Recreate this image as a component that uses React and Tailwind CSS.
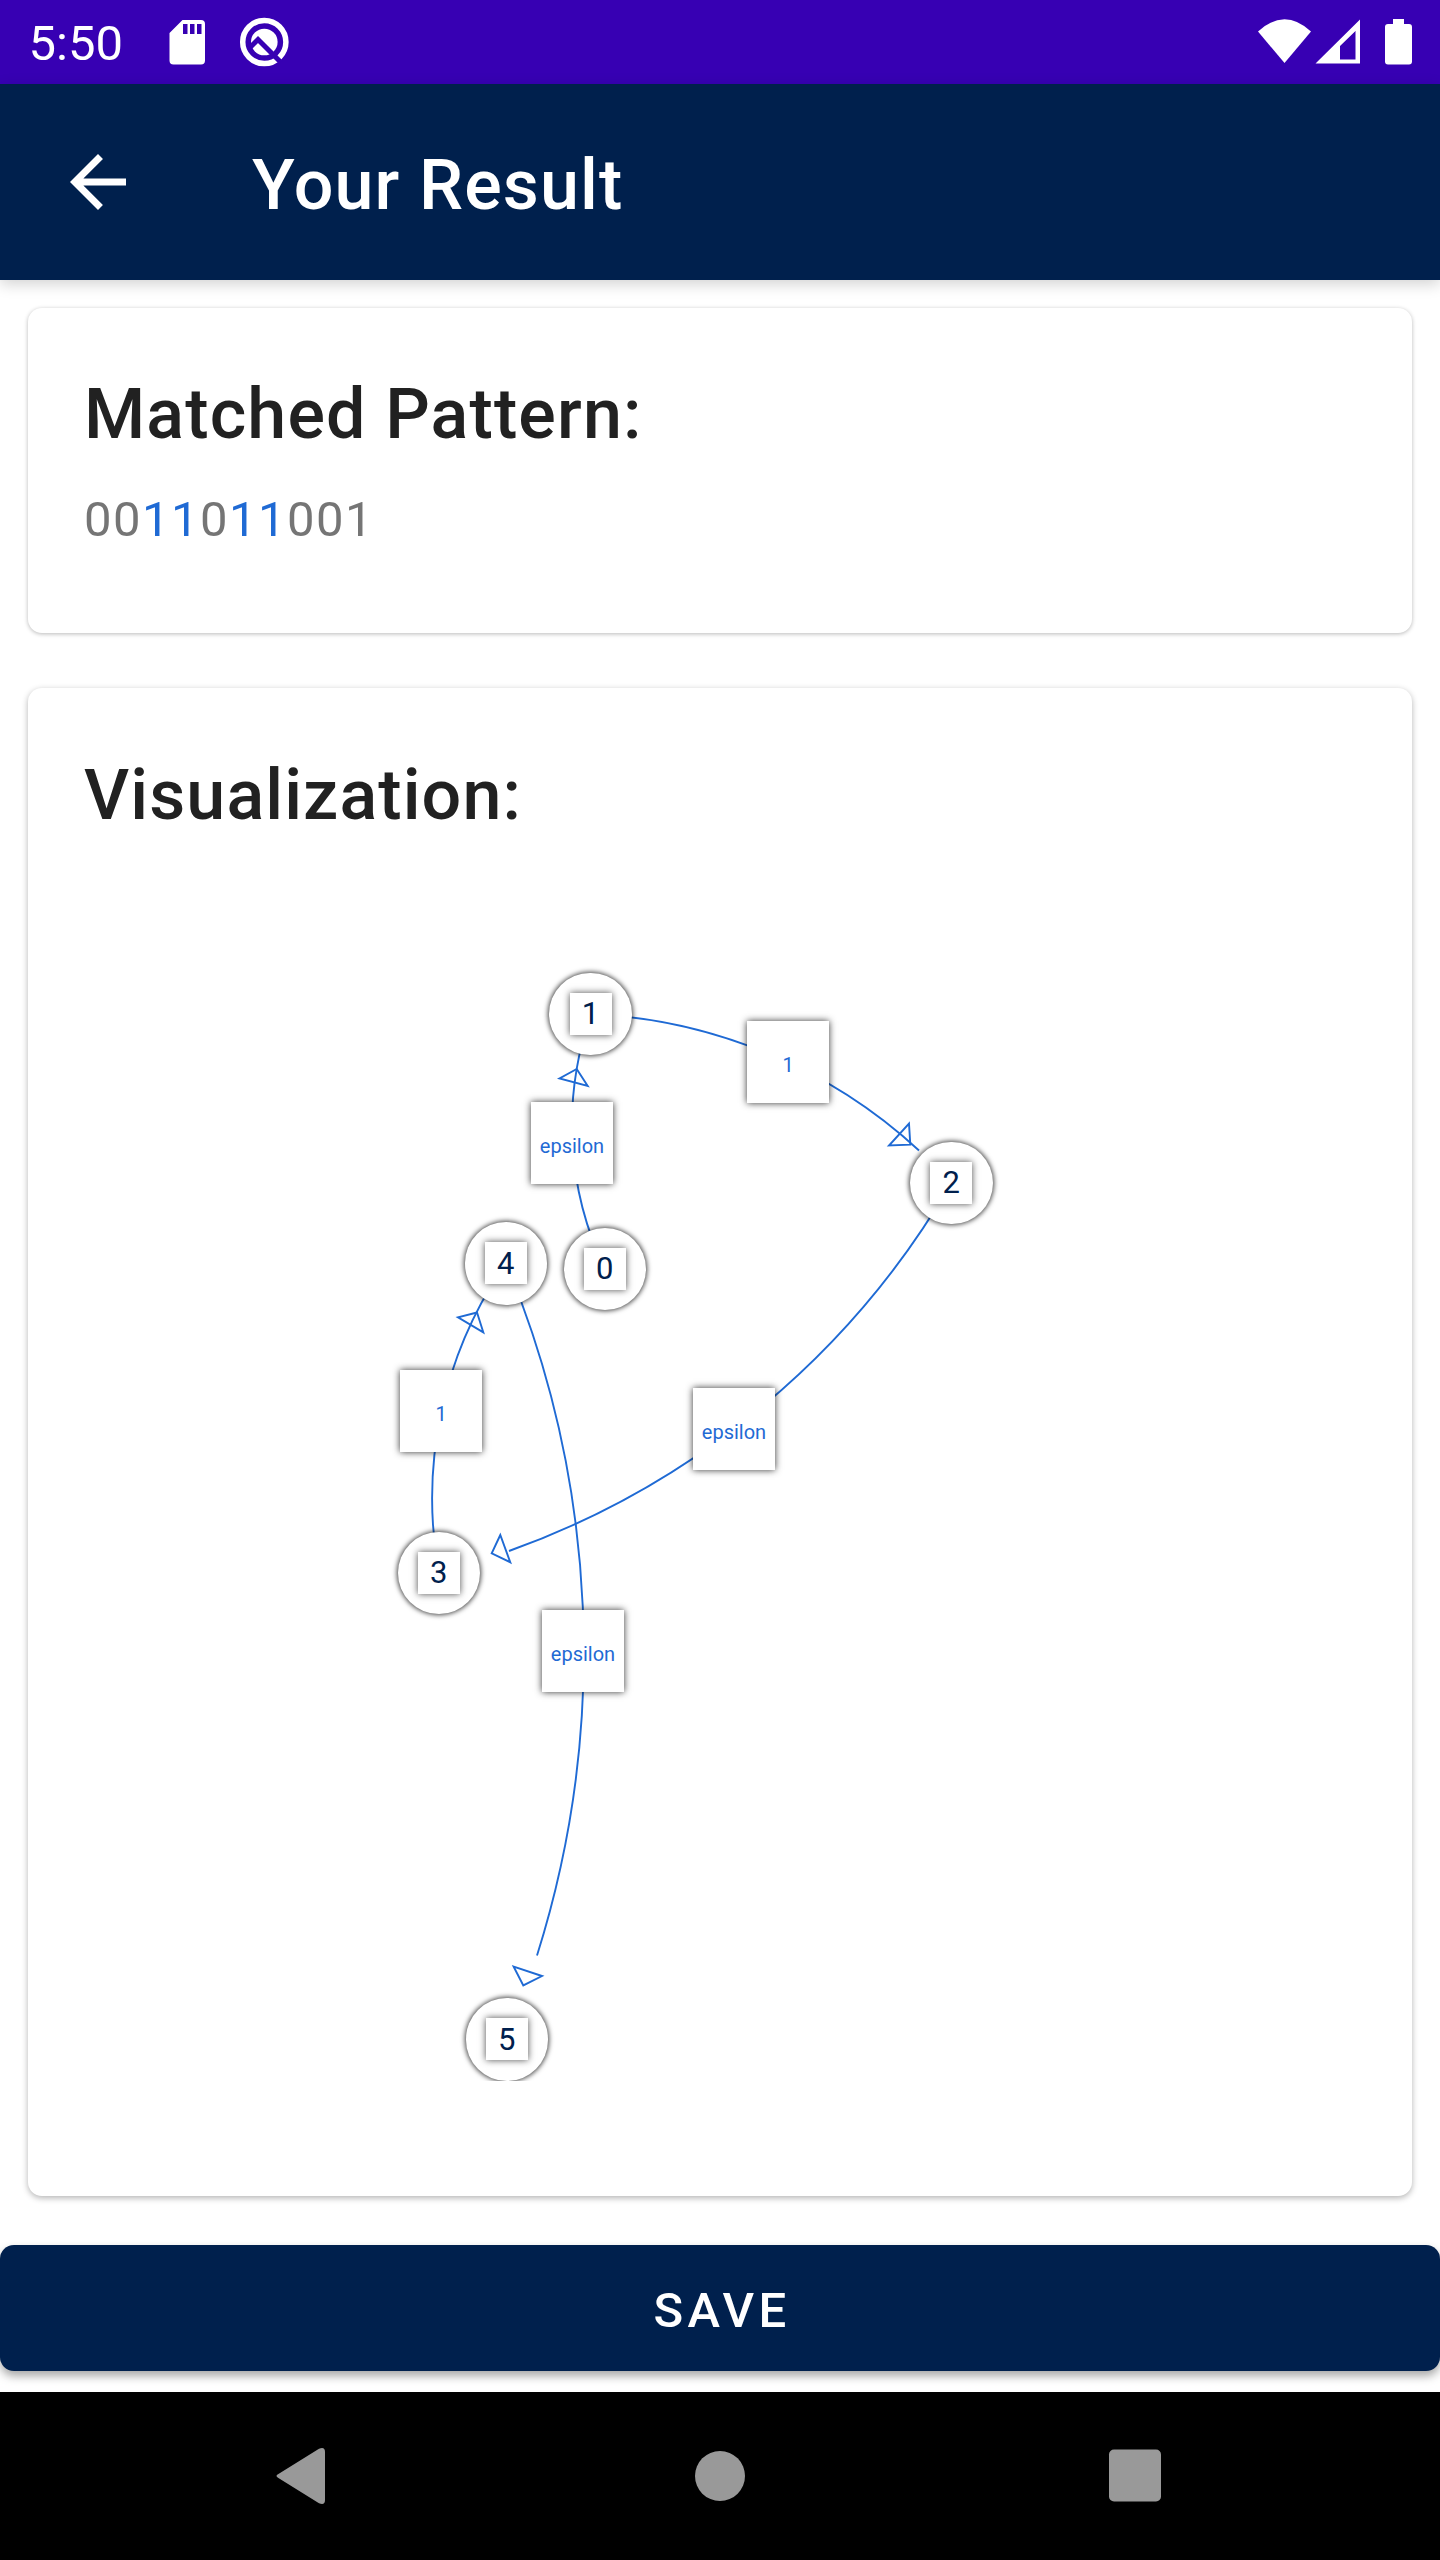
const ROBOTO = "font-[Roboto,sans-serif]";

const NODES = [
  { name: "0", x: 563.5, y: 1227.5 },
  { name: "1", x: 549.3, y: 972.5 },
  { name: "2", x: 910, y: 1141.5 },
  { name: "3", x: 397.5, y: 1531.5 },
  { name: "4", x: 464.5, y: 1222 },
  { name: "5", x: 465.5, y: 1998 },
];

const LABELS = [
  { text: "epsilon", x: 531, y: 1102 },
  { text: "1", x: 747, y: 1021 },
  { text: "epsilon", x: 693, y: 1388 },
  { text: "1", x: 400, y: 1370 },
  { text: "epsilon", x: 542, y: 1610 },
];

const EDGES = [
  "M605 1269 A332 332 0 0 1 591 1014",
  "M591 1014 A517 517 0 0 1 919 1150.5",
  "M951.5 1182.5 A837 837 0 0 1 509 1551",
  "M439 1573 A412 412 0 0 1 506 1263",
  "M506 1263 A1010 1010 0 0 1 537 1955.5",
];

const ARROWS = [
  "576.7,1069 559.5,1078.5 587.7,1086",
  "909,1123.5 910.3,1144.7 889,1145.5",
  "500.3,1535 491.7,1553.3 510.3,1562.3",
  "477,1312.5 458,1317.3 483.3,1332.3",
  "513.7,1966.7 523.3,1985.4 542,1976",
];

function StatusBar() {
  return (
    <div className="flex h-[84px] items-center bg-[#3700b3] pl-[28.500px] pr-[28px] text-white">
      <span className="pt-[4px] text-[49px] leading-[80px]">5:50</span>
      <svg className="ml-[46.500px] h-[84px] w-[38px]" viewBox="169 0 38 84" fill="currentColor">
        <path fillRule="evenodd" d="M182.500 20H201a4 4 0 0 1 4 4V60.500a4 4 0 0 1-4 4H173.500a4 4 0 0 1-4-4V33ZM183 24V34H187.500V24ZM190 24V34H194.500V24ZM197 24V34H201.500V24Z" />
      </svg>
      <svg className="ml-[32px] h-[84px] w-[52px]" viewBox="239 0 52 84">
        <circle cx="264.300" cy="42" r="21.600" fill="none" stroke="currentColor" strokeWidth="5.500" />
        <circle cx="264.300" cy="42" r="13.300" fill="currentColor" />
        <path d="M250 47.500L258 39.500L281 62.500" fill="none" stroke="#3700b3" strokeWidth="5" />
      </svg>
      <svg className="ml-auto h-[84px] w-[156px]" viewBox="1256 0 156 84" fill="currentColor">
        <path d="M1258 31.500Q1284.500 7 1311 31.500L1284.500 63Z" />
        <path fillRule="evenodd" d="M1315.500 63.500L1360 19.500V63.500ZM1340 46V59.500H1355.500V31Z" />
        <path d="M1393 19H1404V24H1409a3 3 0 0 1 3 3V61.500a3 3 0 0 1-3 3H1388a3 3 0 0 1-3-3V27a3 3 0 0 1 3-3H1393Z" />
      </svg>
    </div>
  );
}

function AppBar() {
  return (
    <header className="relative z-10 flex h-[196px] items-center bg-[#00204d] pl-[56px] text-white shadow-[0_4px_14px_rgba(0,0,0,0.18)]">
      <svg className="h-[84px] w-[84px]" viewBox="0 0 24 24" fill="currentColor">
        <path d="M20 11H7.830l5.590-5.590L12 4l-8 8 8 8 1.410-1.410L7.830 13H20v-2z" />
      </svg>
      <h1 className="ml-[112px] pt-[5px] text-[70px] font-medium leading-[82px] tracking-[1.140px]">Your Result</h1>
    </header>
  );
}

function Graph() {
  return (
    <div className="relative mt-[44px] h-[1201px] overflow-hidden">
      <svg className="absolute inset-0 h-full w-full" viewBox="28 880 1384 1201" fill="none" stroke="#1f6ad4" strokeWidth="1.900">
        {EDGES.map((d) => <path key={d} d={d} />)}
      </svg>
      {NODES.map((n) => (
        <div
          key={n.name}
          className="absolute flex h-[82.500px] w-[82.500px] items-center justify-center rounded-full bg-white shadow-[0_0_5px_1px_rgba(0,0,0,0.75)]"
          style={{ left: n.x - 28, top: n.y - 880 }}
        >
          <div className="flex h-[42px] w-[42px] items-center justify-center bg-white text-[31px] leading-none text-[#00204d] shadow-[0_0_7px_rgba(0,0,0,0.7)]">
            {n.name}
          </div>
        </div>
      ))}
      {LABELS.map((l) => (
        <div
          key={l.x}
          className="absolute flex h-[82px] w-[82px] items-center justify-center bg-white pt-[5px] text-[20px] leading-none text-[#1f6ad4] shadow-[0_0_7px_rgba(0,0,0,0.8)]"
          style={{ left: l.x - 28, top: l.y - 880 }}
        >
          {l.text}
        </div>
      ))}
      <svg className="absolute inset-0 h-full w-full" viewBox="28 880 1384 1201" fill="none" stroke="#1f6ad4" strokeWidth="1.900">
        {ARROWS.map((p) => <polygon key={p} points={p} />)}
      </svg>
    </div>
  );
}

export default function App() {
  return (
    <div className={`flex h-[2560px] w-[1440px] flex-col overflow-hidden bg-white ${ROBOTO}`}>
      <StatusBar />
      <AppBar />
      <main className="flex flex-1 flex-col">
        <section className="mx-[28px] mt-[28px] h-[325px] rounded-[14px] bg-white px-[56px] pt-[65px] shadow-[0_1px_4px_rgba(0,0,0,0.28)]">
          <h2 className="text-[70px] font-medium leading-[82px] tracking-[1.140px] text-[#212121]">Matched Pattern:</h2>
          <p className="mt-[36px] text-[49px] leading-[58px] tracking-[1.450px] text-[#757575]">
            00<span className="text-[#1f6ad4]">11</span>0<span className="text-[#1f6ad4]">11</span>001
          </p>
        </section>
        <section className="mx-[28px] mt-[55px] h-[1508px] rounded-[14px] bg-white pt-[66px] shadow-[0_2px_6px_rgba(0,0,0,0.3)]">
          <h2 className="px-[56px] text-[70px] font-medium leading-[82px] tracking-[1.100px] text-[#212121]">Visualization:</h2>
          <Graph />
        </section>
        <button className="mt-[49px] h-[126px] w-full rounded-[14px] bg-[#00204d] pl-[4px] pt-[5px] text-[49px] font-medium tracking-[4.375px] text-white shadow-[0_5px_10px_rgba(0,0,0,0.35)]">
          SAVE
        </button>
      </main>
      <nav className="relative z-10 h-[168px] bg-black">
        <svg className="h-[168px] w-full" viewBox="0 0 1440 168" fill="#999">
          <path d="M278 82.300L319 56.800Q325 54.500 325 60V108Q325 113.500 319 111.200L278 85.700Q275 84 278 82.300Z" />
          <circle cx="720" cy="84" r="25" />
          <rect x="1109" y="57.500" width="52" height="52" rx="5" />
        </svg>
      </nav>
    </div>
  );
}
